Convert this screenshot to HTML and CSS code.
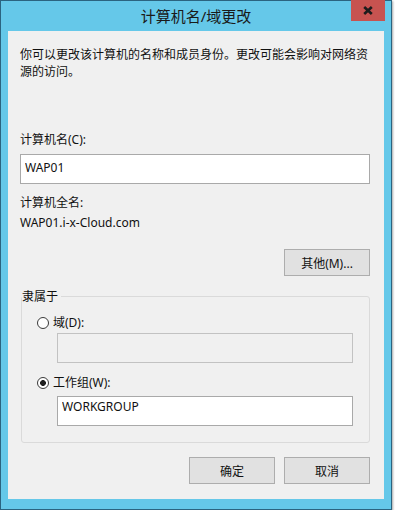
FILE: index.html
```html
<!DOCTYPE html>
<html lang="zh-CN">
<head>
    <meta charset="UTF-8">
    <title>计算机名/域更改</title>
    <link rel="stylesheet" href="styles.css">
</head>
<body>

    <div class="window">
        <!-- Title bar -->
        <div class="title-bar">
            <span class="title">计算机名/域更改</span>
            <button class="close-btn" type="button" aria-label="关闭">
                <svg width="10" height="9" viewBox="0 0 10 9">
                    <path d="M1.2 1 L8.8 8 M8.8 1 L1.2 8" stroke="#1c1c1c" stroke-width="2.6" fill="none"/>
                </svg>
            </button>
        </div>

        <div class="panel">
            <p class="intro">你可以更改该计算机的名称和成员身份。更改可能会影响对网络资源的访问。</p>

            <label class="label label-name" for="pc-name">计算机名(C):</label>
            <input class="text-box" id="pc-name" type="text" value="WAP01">

            <div class="label label-full">计算机全名:</div>
            <div class="full-name">WAP01.i-x-Cloud.com</div>

            <div class="row-right more-row">
                <button class="btn" type="button">其他(M)...</button>
            </div>

            <fieldset class="group">
                <legend>隶属于</legend>

                <label class="radio-row">
                    <input type="radio" name="member">
                    <span>域(D):</span>
                </label>
                <input class="text-box sub-box disabled" type="text" disabled>

                <label class="radio-row second">
                    <input type="radio" name="member" checked>
                    <span>工作组(W):</span>
                </label>
                <input class="text-box sub-box wg-box" type="text" value="WORKGROUP">
            </fieldset>

            <div class="row-right footer">
                <button class="btn" type="button">确定</button>
                <button class="btn" type="button">取消</button>
            </div>
        </div>
    </div>

</body>
</html>
```

FILE: styles.css
```css
* {
    margin: 0;
    padding: 0;
    box-sizing: border-box;
}

body {
    font-family: "Noto Sans", "Noto Sans CJK SC", sans-serif;
    font-size: 12px;
    color: #111;
    background-color: #ffffff;
}

.window {
    width: 392px;
    height: 510px;
    border: 1px solid #2b6480;
    background-color: #65c8e9;
    padding: 0 7px 10px 7px;
    box-shadow: 1px 1px 2px rgba(0, 0, 0, 0.35);
}

.title-bar {
    height: 30px;
    display: grid;
    grid-template-columns: 1fr auto 1fr;
    align-items: center;
}

.title {
    grid-column: 2;
    font-size: 15px;
    line-height: 20px;
    color: #1a1a1a;
    margin-top: -1px;
}

.close-btn {
    grid-column: 3;
    justify-self: end;
    align-self: start;
    width: 34px;
    height: 21px;
    margin-top: -1px;
    margin-right: -1px;
    border: none;
    background-color: #c75350;
    display: flex;
    align-items: center;
    justify-content: center;
}

.panel {
    height: 468px;
    background-color: #f0f0f0;
    padding: 15px 13px 0 12px;
}

.intro {
    line-height: 17px;
    width: 352px;
}

.label {
    display: block;
    line-height: 17px;
}

.label-name {
    margin-top: 51px;
}

.text-box {
    display: block;
    width: 350px;
    height: 30px;
    border: 1px solid #a9a9a9;
    background-color: #ffffff;
    font: inherit;
    color: #111;
    padding: 0 0 4px 4px;
    outline: none;
}

#pc-name {
    margin-top: 6px;
}

.label-full {
    margin-top: 10px;
}

.full-name {
    line-height: 17px;
    margin-top: 3px;
}

.row-right {
    display: flex;
    justify-content: flex-end;
    gap: 9px;
    padding-right: 1px;
}

.more-row {
    margin-top: 18px;
}

.btn {
    width: 86px;
    height: 27px;
    border: 1px solid #adadad;
    background-color: #e1e1e1;
    font: inherit;
    color: #111;
}

.group {
    margin-top: 12px;
    margin-left: 1px;
    width: 349px;
    height: 155px;
    border: 1px solid #dadada;
    border-radius: 3px;
    padding: 0 0 0 15px;
}

.group legend {
    line-height: 17px;
    padding: 0 3px 0 0;
    margin-left: -15px;
}

.radio-row {
    display: flex;
    align-items: center;
    gap: 4px;
    line-height: 17px;
    margin-top: 9px;
}

.radio-row.second {
    margin-top: 11px;
}

.radio-row input {
    appearance: none;
    width: 12px;
    height: 12px;
    border: 1px solid #3a3a3a;
    border-radius: 50%;
    background-color: #ffffff;
}

.radio-row input:checked {
    background: radial-gradient(circle, #1e1e1e 0 2.6px, #ffffff 3.2px);
}

.sub-box {
    width: 296px;
    margin-left: 20px;
    margin-top: 2px;
}

.sub-box.disabled {
    background-color: #f0f0f0;
    border-color: #c2c2c2;
}

.wg-box {
    margin-top: 5px;
    padding: 0 0 10px 4px;
}

.footer {
    margin-top: 14px;
}
```
